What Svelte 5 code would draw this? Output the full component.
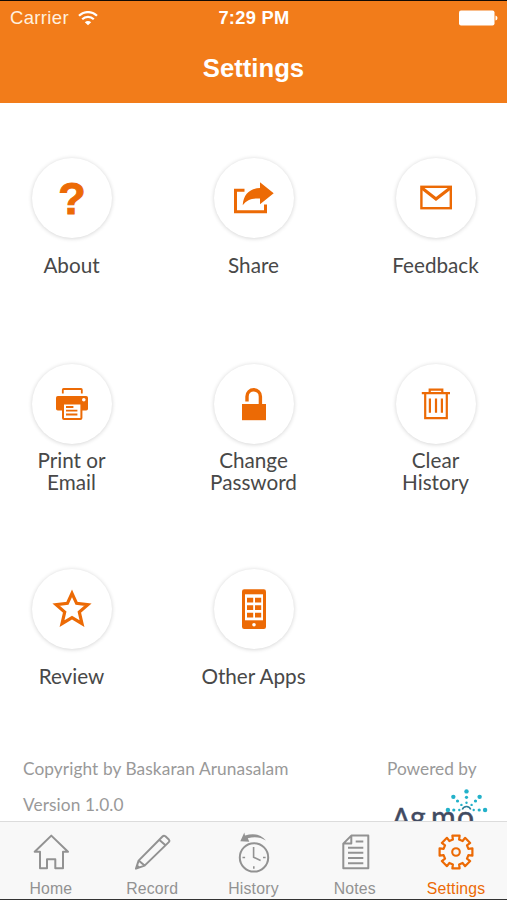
<script>
	const items = [
		{ icon: 'about', label: ['About'] },
		{ icon: 'share', label: ['Share'] },
		{ icon: 'mail', label: ['Feedback'] },
		{ icon: 'print', label: ['Print or', 'Email'] },
		{ icon: 'lock', label: ['Change', 'Password'] },
		{ icon: 'trash', label: ['Clear', 'History'] },
		{ icon: 'star', label: ['Review'] },
		{ icon: 'phone', label: ['Other Apps'] }
	];

	const tabs = ['Home', 'Record', 'History', 'Notes', 'Settings'];
	let active = $state('Settings');

	// outline of an eight-toothed gear around 20,20
	function gearPath() {
		const points = [];
		for (let i = 0; i < 8; i++) {
			const mid = i * 45;
			for (const [offset, r] of [[-14, 12.8], [-12.5, 16.8], [12.5, 16.8], [14, 12.8]]) {
				const a = ((mid + offset) * Math.PI) / 180;
				points.push(`${(20 + r * Math.sin(a)).toFixed(2)} ${(20 - r * Math.cos(a)).toFixed(2)}`);
			}
		}
		return 'M' + points.join('L') + 'Z';
	}

	// rays of dots above the logo
	const dots = [];
	for (const angle of [-90, -45, 0, 45, 90]) {
		[[7.2, 1.2], [12.7, 1.6], [18.6, 2.2]].forEach(([d, r]) => {
			const a = (angle * Math.PI) / 180;
			dots.push({ x: 79.5 + d * Math.sin(a), y: 22 - d * Math.cos(a), r });
		});
	}
</script>

<div class="screen">
	<header>
		<div class="status">
			<div class="carrier">
				Carrier
				<svg width="20" height="15" viewBox="0 0 20 15" fill="none" stroke="#fff" stroke-width="2.2">
					<path d="M1 4.8C6-.2 14-.2 19 4.8M4.2 8.3C7.5 5.1 12.5 5.1 15.8 8.3" />
					<path d="M10 14.3 6.8 11.2Q10 8.8 13.2 11.2Z" fill="#fff" stroke="none" />
				</svg>
			</div>
			<div class="time">7:29 PM</div>
			<div class="power">
				<svg width="39" height="16" viewBox="0 0 39 16" fill="#fff">
					<rect x="0" y="0.5" width="35.5" height="15" rx="2" />
					<path d="M36.5 5.5q2 .5 2 2.5t-2 2.5z" />
				</svg>
			</div>
		</div>
		<h1>Settings</h1>
	</header>

	<main>
		<div class="grid">
			{#each items as item}
				<div class="item">
					<div class="circle">
						<svg width="48" height="48" viewBox="0 0 48 48" fill="none" stroke="#ec6a05" stroke-width="2">
							{#if item.icon === 'about'}
								<text x="24" y="39.6" text-anchor="middle" class="question">?</text>
							{:else if item.icon === 'share'}
								<path d="M14.5 16.3H5.5V37.8H35.5V30.5" stroke-width="3" />
								<path d="M30 8.3 43.7 19.3 30 30.3V24.6C22 24 17 26 12.7 31.2C13.5 20 20 14.3 30 14.1Z" fill="#ec6a05" stroke="none" />
							{:else if item.icon === 'mail'}
								<rect x="9.4" y="12.8" width="29.4" height="21.4" stroke-width="2.4" />
								<path d="M9.6 13.8 24 25 38.6 13.8" stroke-width="3.2" />
							{:else if item.icon === 'print'}
								<path d="M14.8 13.6V9.8q0-.8.8-.8H33q.8 0 .8.8v3.8" stroke-width="1.8" />
								<rect x="8" y="16" width="32" height="14.6" rx="1.8" fill="#ec6a05" stroke="none" />
								<circle cx="35.8" cy="19.8" r="1.8" fill="#fff" stroke="none" />
								<rect x="15" y="23.5" width="18.4" height="15.4" rx="1" fill="#fff" />
								<path d="M18 27h7.4M18 30.7h11.4M18 34.5h11.4" stroke-width="1.8" />
							{:else if item.icon === 'lock'}
								<rect x="12" y="24" width="24" height="16.2" fill="#ec6a05" stroke="none" />
								<path d="M17 21.4V16.4a6.7 6.7 0 0 1 13.4 0V25" stroke-width="3.4" />
							{:else if item.icon === 'trash'}
								<path d="M9.8 13.2H38M17.7 13V9.6H30.3V13M13.2 13V38.2H34.8V13" stroke-width="2.2" />
								<path d="M17.9 18.5V32.7M24 18.5V32.7M29.9 18.5V32.7" stroke-width="2.2" />
							{:else if item.icon === 'star'}
								<path d="M24 8.3 28.6 18.3 39.8 19.6 31.3 27 34 38.6 24 32.6 14 38.6 16.7 27 8.2 19.6 19.4 18.3Z" stroke-width="3.2" stroke-miterlimit="10" />
							{:else}
								<rect x="12" y="4.3" width="24" height="39.6" rx="2.2" fill="#ec6a05" stroke="none" />
								<rect x="15" y="9.3" width="18" height="26" fill="#fff" stroke="none" />
								<path d="M17 15.2h6.2M25 15.2h6.2M17 22.6h6.2M25 22.6h6.2M17 30.1h6.2M25 30.1h6.2" stroke-width="4.8" />
								<circle cx="24" cy="39.8" r="1.8" fill="#fff" stroke="none" />
							{/if}
						</svg>
					</div>
					<div class="label">
						{#each item.label as line}
							<span>{line}</span>
						{/each}
					</div>
				</div>
			{/each}
		</div>

		<footer>
			<div class="credits">
				<p>Copyright by Baskaran Arunasalam</p>
				<p>Version 1.0.0</p>
			</div>
			<div class="powered">
				<p>Powered by</p>
				<svg width="106" height="50" viewBox="0 0 106 50">
					<text y="40" class="brand"><tspan x="5" class="initial">A</tspan><tspan x="23 44 70">gmo</tspan></text>
					<path d="M75.3 21.5a4.4 4.4 0 0 1 8.4 0" fill="none" stroke="#2b7f98" stroke-width="1.5" />
					{#each dots as dot}
						<circle cx={dot.x} cy={dot.y} r={dot.r} fill="#22b1c9" />
					{/each}
				</svg>
			</div>
		</footer>
	</main>

	<nav>
		{#each tabs as tab}
			<button class:active={active === tab} onclick={() => (active = tab)}>
				<svg width="40" height="40" viewBox="0 0 40 40" fill="none" stroke="currentColor" stroke-width="2">
					{#if tab === 'Home'}
						<path d="M20.3 3.6 37 19.8H32V36.2H24.3V27.2H16V36.2H9V19.8H3.7Z" stroke-linejoin="round" />
					{:else if tab === 'Record'}
						<path d="M4 36.6 6.6 28.6 30.5 4.5Q31.8 3.2 33.4 4.3L36.8 7.4Q38 8.8 36.8 10.1L12.6 33.6ZM6.6 28.6l6 5M27.2 7.8l6.3 5.4" stroke-linejoin="round" />
						<path d="M4 36.6l1.3-4 3 2.6z" fill="currentColor" stroke="none" />
					{:else if tab === 'History'}
						<circle cx="21" cy="25.4" r="14.2" />
						<path d="M20.6 15V25.3L27.6 28.4M9.5 25.5h2.6M30 25.5h2.6M20.8 34.3v2.4" stroke-width="1.6" />
						<path d="M12 3.6Q25-.8 33 8.6Q25 3.2 14.8 6.2L16.3 9.7 7.3 9.2 11.3.5Z" fill="currentColor" stroke="none" />
					{:else if tab === 'Notes'}
						<path d="M16.3 3.6H33.3V36.2H8.3V11.6ZM16.3 3.6V11.6H8.3" stroke-linejoin="round" />
						<path d="M20.7 9.6H28.3M13 15.7H28.3M13 20.8H28.3M13 26.1H28.3M13 31.3H28.3" />
					{:else}
						<path d={gearPath()} stroke-width="2.2" stroke-linejoin="round" />
						<circle cx="20" cy="20" r="3.8" stroke-width="2.1" />
					{/if}
				</svg>
				<span>{tab}</span>
			</button>
		{/each}
	</nav>
</div>

<style>
	:global(body) {
		margin: 0;
		background: #fff;
	}

	.screen {
		box-sizing: border-box;
		width: 507px;
		height: 900px;
		display: flex;
		flex-direction: column;
		overflow: hidden;
		border-top: 1px solid #120a04;
		border-bottom: 1px solid #333;
		font-family: Lato, sans-serif;
	}

	header {
		height: 101.5px;
		flex: none;
		background: #f27c1a;
		color: #fff;
		font-family: "Liberation Sans", Arial, sans-serif;
	}

	.status {
		display: grid;
		grid-template-columns: 1fr auto 1fr;
		align-items: center;
		height: 34px;
		padding: 0 9px 0 10px;
	}

	.carrier {
		display: flex;
		align-items: center;
		gap: 9px;
		font-size: 18.5px;
		letter-spacing: 0.35px;
		color: #fff0df;
	}

	.time {
		font-size: 18.3px;
		font-weight: bold;
		letter-spacing: 0.3px;
	}

	.power {
		display: flex;
		justify-content: flex-end;
	}

	h1 {
		margin: 0;
		line-height: 66px;
		text-align: center;
		font-size: 25.7px;
		font-weight: bold;
	}

	main {
		flex: 1;
		min-height: 0;
		overflow: hidden;
	}

	.grid {
		display: grid;
		grid-template-columns: repeat(3, 182px);
		grid-auto-rows: 205.5px;
		justify-content: center;
		padding-top: 55.5px;
	}

	.item {
		display: flex;
		flex-direction: column;
		align-items: center;
	}

	.circle {
		width: 80px;
		height: 80px;
		display: flex;
		align-items: center;
		justify-content: center;
		border-radius: 50%;
		background: #fff;
		box-shadow: 0 0.5px 4px rgba(0, 0, 0, 0.18);
	}

	.circle svg {
		overflow: visible;
	}

	.question {
		font: bold 45px "Liberation Sans", Arial, sans-serif;
		fill: #ec6a05;
		stroke: #ec6a05;
		stroke-width: 1;
	}

	.label {
		height: 44px;
		margin-top: 5.5px;
		display: flex;
		flex-direction: column;
		justify-content: center;
		align-items: center;
		font-size: 20.7px;
		line-height: 22.5px;
		color: #484848;
		white-space: nowrap;
	}

	footer {
		display: flex;
		justify-content: space-between;
		margin-top: -24px;
		padding: 0 14px 0 23px;
		font-size: 17.3px;
		color: #999;
	}

	footer p {
		margin: 0;
		line-height: 36.5px;
	}

	.credits {
		letter-spacing: 0.08px;
	}

	.powered {
		width: 106px;
		display: flex;
		flex-direction: column;
	}

	.powered svg {
		flex: none;
		margin-top: 1px;
	}

	.brand {
		font: 30px Lato, sans-serif;
		fill: #414a61;
		stroke: #414a61;
		stroke-width: 0.5;
	}

	.initial {
		font-size: 27px;
	}

	nav {
		flex: none;
		box-sizing: border-box;
		height: 78px;
		display: grid;
		grid-template-columns: repeat(5, 101.3px);
		justify-content: center;
		border-top: 1px solid #dcdcdc;
		background: #f8f8f8;
	}

	button {
		display: flex;
		flex-direction: column;
		align-items: center;
		border: 0;
		margin: 0;
		padding: 10px 0 0;
		background: none;
		color: #929292;
		font: 15.8px "Liberation Sans", Arial, sans-serif;
		letter-spacing: 0.2px;
	}

	button svg {
		overflow: visible;
	}

	button span {
		margin-top: 8px;
		line-height: 18px;
	}

	.active {
		color: #ec6a05;
	}
</style>
